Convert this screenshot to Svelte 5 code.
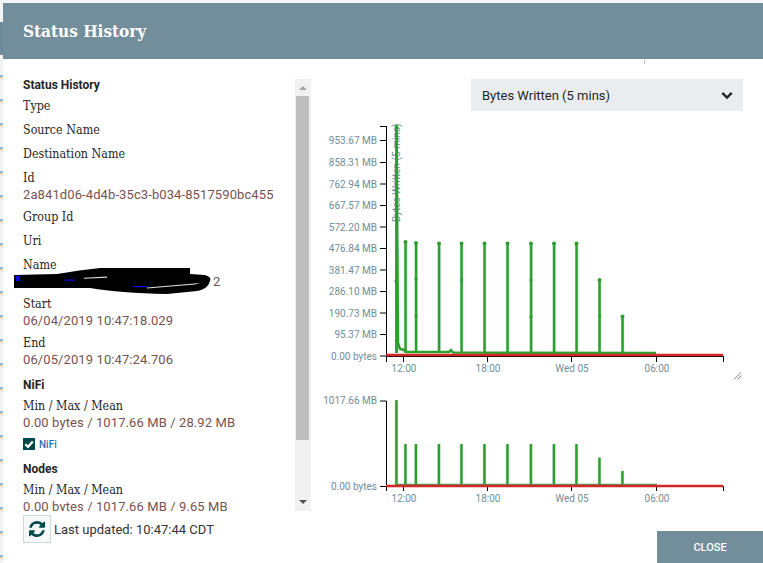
<script>
  // spike x position and top y for the detail chart / overview chart
  const spikes = [
    { x: 396.5, top: 127, mini: 400 },
    { x: 405.5, top: 242, mini: 444 },
    { x: 416, top: 243, mini: 444 },
    { x: 439, top: 243.5, mini: 444 },
    { x: 461.5, top: 243.5, mini: 444 },
    { x: 484.5, top: 243.5, mini: 444 },
    { x: 507.5, top: 243.5, mini: 444 },
    { x: 531, top: 243.5, mini: 444 },
    { x: 554, top: 243.5, mini: 444 },
    { x: 576.5, top: 243.5, mini: 444 },
    { x: 599.5, top: 280, mini: 457.5 },
    { x: 622.5, top: 316.5, mini: 471 }
  ];

  const midDots = [
    [396, 281], [416, 279], [461.5, 280], [531, 280], [416, 316], [531, 317], [599.5, 316]
  ];

  const yTicks = [
    { y: 140.5, label: '953.67 MB' },
    { y: 162.5, label: '858.31 MB' },
    { y: 184, label: '762.94 MB' },
    { y: 205.5, label: '667.57 MB' },
    { y: 227, label: '572.20 MB' },
    { y: 248.5, label: '476.84 MB' },
    { y: 270, label: '381.47 MB' },
    { y: 291.5, label: '286.10 MB' },
    { y: 313, label: '190.73 MB' },
    { y: 334.5, label: '95.37 MB' },
    { y: 356, label: '0.00 bytes' }
  ];

  const xTicks = [
    { x: 403.5, label: '12:00' },
    { x: 487.5, label: '18:00' },
    { x: 571.5, label: 'Wed 05' },
    { x: 656.5, label: '06:00' }
  ];

  const fields = [
    { label: 'Type' },
    { label: 'Source Name' },
    { label: 'Destination Name' },
    { label: 'Id', value: '2a841d06-4d4b-35c3-b034-8517590bc455' },
    { label: 'Group Id' },
    { label: 'Uri' }
  ];
</script>

<div class="dialog">
  <header>Status History</header>
  <div class="body">
    <div class="left">
      <div class="scroller">
        <div class="details">
          <h3 class="first">Status History</h3>
          {#each fields as f}
            <div class="field">
              <div class="label">{f.label}</div>
              {#if f.value}<div class="value">{f.value}</div>{/if}
            </div>
          {/each}
          <div class="field">
            <div class="label">Name</div>
            <div class="value redacted">
              <svg class="scribble" width="198" height="28" viewBox="14 269 198 28">
                <path d="M14 277 L57 276 Q80 272 100 270 L190 270 L190 276 L205 277 Q212 279 210 283 Q208 291 197 293 L167 296 Q120 295 90 290 L14 290 Z" fill="#000" />
                <path d="M16 278 h4 v5 h-4z M65 281.500 h10 v1.200 h-10z M133 288 h14 v1.200 h-14z" fill="#0a0ae0" />
                <path d="M84 279.800 L107 278.500 L107 279.800 L84 280.800z M147 289.500 L200 285 L195 286.500 L147 290.500z" fill="#ddd" />
              </svg>
              <span>2</span>
            </div>
          </div>
          <div class="field">
            <div class="label">Start</div>
            <div class="value">06/04/2019 10:47:18.029</div>
          </div>
          <div class="field">
            <div class="label">End</div>
            <div class="value">06/05/2019 10:47:24.706</div>
          </div>
          <h3>NiFi</h3>
          <div class="field tight">
            <div class="label">Min / Max / Mean</div>
            <div class="value">0.00 bytes / 1017.66 MB / 28.92 MB</div>
          </div>
          <div class="legend">
            <span class="check">
              <svg width="12" height="12" viewBox="0 0 12 12"><path d="M2.300 6.200 L5 8.800 L9.800 3.400" fill="none" stroke="#fff" stroke-width="2.200" /></svg>
            </span>
            <span>NiFi</span>
          </div>
          <h3>Nodes</h3>
          <div class="field tight">
            <div class="label">Min / Max / Mean</div>
            <div class="value">0.00 bytes / 1017.66 MB / 9.65 MB</div>
          </div>
        </div>
        <div class="scrollbar">
          <span class="arrow up"></span>
          <div class="track"><div class="thumb"></div></div>
          <span class="arrow down"></span>
        </div>
      </div>
      <div class="refresh">
        <button aria-label="Refresh">
          <svg width="16" height="16" viewBox="0 0 1536 1536"><path fill="#004849" d="M1511 928q0 5-1 7-64 268-268 434.500t-478 166.500q-146 0-282.500-55t-243.500-157l-129 129q-19 19-45 19t-45-19-19-45v-448q0-26 19-45t45-19h448q26 0 45 19t19 45-19 45l-137 137q71 66 161 102t187 36q134 0 250-65t186-179q11-17 53-117 8-23 30-23h192q13 0 22.500 9.500t9.500 22.500zm25-800v448q0 26-19 45t-45 19h-448q-26 0-45-19t-19-45 19-45l138-138q-148-137-349-137-134 0-250 65t-186 179q-11 17-53 117-8 23-30 23h-199q-13 0-22.500-9.500t-9.500-22.500v-7q65-268 270-434.500t480-166.500q146 0 284 55.500t245 156.500l130-129q19-19 45-19t45 19 19 45z" /></svg>
        </button>
        <span>Last updated: 10:47:44 CDT</span>
      </div>
    </div>

    <div class="right">
      <span class="speck"></span>
      <div class="select">
        <span>Bytes Written (5 mins)</span>
        <svg width="12" height="9" viewBox="0 0 12 9"><path d="M1.300 1.800 L6 6.500 L10.700 1.800" fill="none" stroke="#262626" stroke-width="2.400" /></svg>
      </div>

      <svg class="chart" width="452" height="390" viewBox="311 120 452 390">
        <!-- detail chart -->
        <text class="title" transform="translate(399.500 222) rotate(-90)">Bytes Written (5 mins)</text>
        {#each yTicks as t}
          <line class="axis" x1="380" x2="386.500" y1={t.y} y2={t.y} />
          <text class="tick" x="377" y={t.y + 3.500}>{t.label}</text>
        {/each}
        <line class="axis" x1="380" x2="386.500" y1="126.500" y2="126.500" />
        <line class="axis" x1="386.500" x2="386.500" y1="126" y2="356.500" />
        <line class="axis" x1="386" x2="723.500" y1="356.500" y2="356.500" />
        {#each [386.500, ...xTicks.map(t => t.x), 723.500] as x}
          <line class="axis" x1={x} x2={x} y1="356" y2="362" />
        {/each}
        {#each xTicks as t}
          <text class="tick mid" x={t.x + 0.500} y="372">{t.label}</text>
        {/each}

        {#each spikes as s}
          <line class="halo" x1={s.x + 1} x2={s.x + 1} y1={s.top + 2} y2="353" />
        {/each}
        <path class="line" d="M396.500 353 L396.500 127 L398 343 L400 349 L404 350 L406 352 L449 352 L451 350 L453 352.500 L656 353" />
        {#each spikes as s}
          <line class="line" x1={s.x} x2={s.x} y1={s.top} y2="353" />
          <circle class="dot" cx={s.x} cy={s.top} r="2" />
        {/each}
        {#each midDots as d}
          <circle class="dot" cx={d[0]} cy={d[1]} r="1.600" />
        {/each}
        <line class="red" x1="386" x2="723" y1="355" y2="355" />

        <!-- resize handle -->
        <path class="handle" d="M734 379.500 L741 372.500 M737.500 379.500 L741.500 375.500" />

        <!-- overview chart -->
        <line class="axis" x1="380" x2="386.500" y1="401" y2="401" />
        <line class="axis" x1="380" x2="386.500" y1="486.500" y2="486.500" />
        <line class="axis" x1="386.500" x2="386.500" y1="401" y2="487" />
        <line class="axis" x1="386" x2="723.500" y1="486.500" y2="486.500" />
        {#each [386.500, ...xTicks.map(t => t.x), 723.500] as x}
          <line class="axis" x1={x} x2={x} y1="486" y2="491" />
        {/each}
        <text class="tick" x="377" y="404">1017.66 MB</text>
        <text class="tick" x="377" y="490">0.00 bytes</text>
        {#each xTicks as t}
          <text class="tick mid" x={t.x + 0.500} y="502">{t.label}</text>
        {/each}
        {#each spikes as s}
          <line class="halo" x1={s.x - 1} x2={s.x - 1} y1={s.mini + 1} y2="485" />
          <line class="line thin" x1={s.x} x2={s.x} y1={s.mini} y2="485" />
        {/each}
        <line class="base" x1="396" x2="657" y1="484.500" y2="484.500" />
        <line class="red" x1="386" x2="723" y1="486" y2="486" />
      </svg>

      <button class="close">CLOSE</button>
    </div>
  </div>
</div>

<style>
  :global(body) {
    height: 100vh;
    overflow: hidden;
    background:
      linear-gradient(#6f8b98, #6f8b98) 0 22px / 3px 33px no-repeat,
      repeating-linear-gradient(#f1f3f4 0 20px, #8fb4da 20px 22px, #eed3ac 22px 24px) 0 55px / 3px 100% no-repeat,
      #f3f4f5;
  }

  .dialog {
    box-sizing: border-box;
    margin: 3px 0 0 3px;
    height: 560px;
    background: #fff;
    display: flex;
    flex-direction: column;
    overflow: hidden;
  }

  header {
    height: 56px;
    flex: none;
    background: #728e9b;
    color: #fff;
    font-family: "DejaVu Serif Condensed", "DejaVu Serif", serif;
    font-weight: 700;
    font-size: 17px;
    line-height: 57px;
    padding-left: 20px;
  }

  .body {
    flex: 1;
    display: flex;
    min-height: 0;
  }

  .left {
    width: 308px;
    flex: none;
    padding: 20px 0 0 20px;
    box-sizing: border-box;
  }

  .scroller {
    height: 432px;
    display: flex;
  }

  /* clip only at the bottom, the scribble hangs out to the left */
  .details {
    flex: 1;
    min-width: 0;
    height: 100%;
    clip-path: inset(0 0 0 -20px);
  }

  h3 {
    margin: 9px 0 4px;
    font: 700 12px/16px Roboto, sans-serif;
    color: #262626;
  }

  h3.first {
    margin: 0 0 5px;
    line-height: 13px;
  }

  .field {
    min-height: 19px;
    margin-bottom: 5px;
  }

  .field.tight {
    margin-bottom: 7px;
  }

  .label {
    font: 12.4px/17px "DejaVu Serif Condensed", "DejaVu Serif", serif;
    color: #262626;
  }

  .value {
    font: 13px/17px Roboto, sans-serif;
    letter-spacing: 0.1px;
    color: #775351;
  }

  .redacted {
    display: flex;
    align-items: center;
    height: 17px;
  }

  .scribble {
    flex: none;
    margin: -6px 1px -5px -9px;
  }

  .legend {
    display: flex;
    align-items: center;
    gap: 4px;
    height: 12px;
    margin-bottom: 11px;
    font: 500 10px Roboto, sans-serif;
    color: #1f6fb4;
  }

  .check {
    width: 12px;
    height: 12px;
    background: #004849;
    display: block;
  }

  .check svg {
    display: block;
  }

  .scrollbar {
    width: 16px;
    flex: none;
    background: #f1f1f1;
    display: flex;
    flex-direction: column;
    align-items: center;
  }

  .track {
    flex: 1;
    width: 100%;
  }

  .thumb {
    height: 344px;
    margin: 0 2px 0 1px;
    background: #bdbdbd;
  }

  .arrow {
    flex: none;
    width: 0;
    height: 0;
    border-left: 4px solid transparent;
    border-right: 4px solid transparent;
  }

  .arrow.up {
    border-bottom: 4px solid #a3a3a3;
    margin: 7px 0 6px;
  }

  .arrow.down {
    border-top: 4px solid #505050;
    margin: 6px 0 7px;
  }

  .refresh {
    display: flex;
    align-items: center;
    gap: 3px;
    margin-top: 4px;
    font: 13px Roboto, sans-serif;
    color: #333;
  }

  .refresh button {
    width: 28px;
    height: 28px;
    padding: 0;
    background: #f7f9f9;
    border: 1px solid #ccdadb;
    display: flex;
    align-items: center;
    justify-content: center;
  }

  .right {
    flex: 1;
    position: relative;
    display: flex;
    flex-direction: column;
    padding-top: 20px;
    min-width: 0;
  }

  .speck {
    position: absolute;
    left: 333px;
    top: 1px;
    width: 1px;
    height: 4px;
    background: #bbb;
  }

  .select {
    box-sizing: border-box;
    height: 32px;
    margin: 0 20px 0 160px;
    padding: 0 10px 0 11px;
    background: #e9edf0;
    display: flex;
    align-items: center;
    justify-content: space-between;
    font: 13px Roboto, sans-serif;
    color: #262626;
  }

  .chart {
    display: block;
    margin-top: 9px;
    flex: none;
  }

  .axis {
    stroke: #000;
    stroke-width: 1;
  }

  .tick {
    font: 10px Roboto, sans-serif;
    fill: #728e9b;
    text-anchor: end;
  }

  .tick.mid {
    text-anchor: middle;
  }

  .title {
    font: 10px Roboto, sans-serif;
    fill: #728e9b;
  }

  .line {
    fill: none;
    stroke: #2ca02c;
    stroke-width: 2.500;
  }

  .line.thin {
    stroke-width: 2.500;
  }

  .halo {
    stroke: #9ec9c0;
    stroke-width: 1.500;
    opacity: 0.7;
  }

  .dot {
    fill: #2ca02c;
  }

  .red {
    stroke: #d62728;
    stroke-width: 2.500;
  }

  .base {
    stroke: #4f9b55;
    stroke-width: 1.500;
  }

  .handle {
    fill: none;
    stroke: #555;
    stroke-width: 0.800;
  }

  .close {
    position: absolute;
    right: 0;
    bottom: 0;
    width: 106px;
    height: 32px;
    border: 0;
    padding: 0;
    background: #728e9b;
    color: #fff;
    font: 500 11px Roboto, sans-serif;
  }
</style>
